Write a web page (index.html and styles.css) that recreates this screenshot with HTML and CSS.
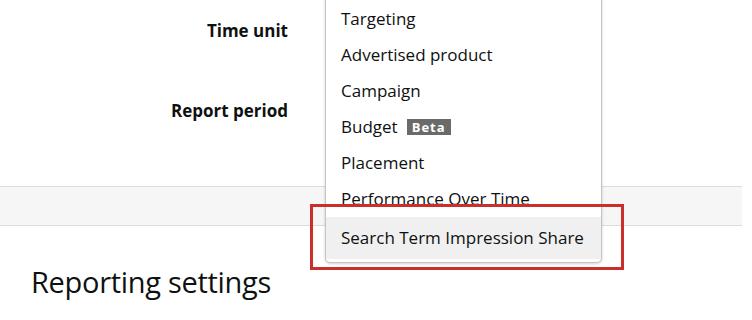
FILE: index.html
```html
<!DOCTYPE html>
<html lang="en">
<head>
<meta charset="utf-8">
<title>Report settings</title>
<link rel="stylesheet" href="styles.css">
</head>
<body>
<div class="page">
  <section class="form">
    <div class="row row-time">
      <div class="label">Time unit</div>
      <div class="field"></div>
    </div>
    <div class="row row-period">
      <div class="label">Report period</div>
      <div class="field"></div>
    </div>
  </section>
  <div class="band"></div>
  <h2 class="heading">Reporting settings</h2>

  <ul class="menu">
    <li class="item">Targeting</li>
    <li class="item">Advertised product</li>
    <li class="item">Campaign</li>
    <li class="item">Budget <span class="badge">Beta</span></li>
    <li class="item">Placement</li>
    <li class="item">Performance Over Time</li>
    <li class="item item-active">Search Term Impression Share</li>
  </ul>
  <div class="highlight"></div>
</div>
</body>
</html>
```

FILE: styles.css
```css
* { box-sizing: border-box; }
html, body {
  margin: 0;
  padding: 0;
  background: #ffffff;
}
body {
  font-family: "Open Sans", "Noto Sans", "Liberation Sans", sans-serif;
  color: #0f1111;
  width: 752px;
  height: 320px;
  overflow: hidden;
}
.page {
  position: relative;
  width: 752px;
  height: 320px;
}
.form {
  display: flex;
  flex-direction: column;
  padding-top: 20px;
  gap: 58px;
}
.row {
  display: grid;
  grid-template-columns: 288px 1fr;
  align-items: center;
}
.label {
  font-weight: 700;
  font-size: 17px;
  line-height: 22px;
  text-align: right;
}
.field { height: 22px; }
.band {
  margin-top: 64px;
  width: 742px;
  height: 40px;
  background: #f6f6f6;
  border-top: 1px solid #dcdcdc;
  border-bottom: 1px solid #dcdcdc;
}
.heading {
  margin: 39px 0 0 31px;
  font-size: 29px;
  font-weight: 400;
  line-height: 34px;
  letter-spacing: -0.3px;
}
.menu {
  position: absolute;
  left: 325px;
  top: -4px;
  width: 277px;
  margin: 0;
  padding: 4px 0 3px;
  list-style: none;
  background: #ffffff;
  border: 1px solid #c4c4c4;
  border-radius: 0 0 5px 5px;
  box-shadow: 0 1px 3px rgba(0, 0, 0, 0.18);
}
.item {
  height: 36px;
  padding-left: 15px;
  display: flex;
  align-items: center;
  font-size: 17px;
  line-height: 22px;
  white-space: nowrap;
}
.item-active {
  height: 42px;
  background: #f0f0f0;
}
.badge {
  display: inline-block;
  margin-left: 9px;
  padding: 0 5px;
  height: 16px;
  line-height: 16px;
  background: #6a6a6a;
  color: #ffffff;
  font-size: 13px;
  font-weight: 700;
  letter-spacing: 1px;
}
.highlight {
  position: absolute;
  left: 310px;
  top: 204px;
  width: 314px;
  height: 66px;
  border: 3.5px solid #c9302c;
}
```
